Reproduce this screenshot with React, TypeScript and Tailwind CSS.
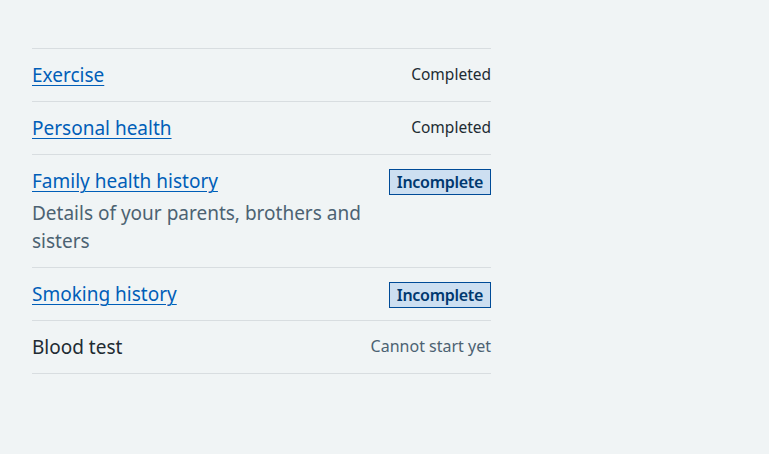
type TaskStatus = "completed" | "incomplete" | "cannot-start";

type Task = {
  name: string;
  href?: string;
  hint?: string;
  status: TaskStatus;
};

const tasks: readonly Task[] = [
  { name: "Exercise", href: "#", status: "completed" },
  { name: "Personal health", href: "#", status: "completed" },
  {
    name: "Family health history",
    href: "#",
    hint: "Details of your parents, brothers and sisters",
    status: "incomplete",
  },
  { name: "Smoking history", href: "#", status: "incomplete" },
  { name: "Blood test", status: "cannot-start" },
];

function Status({ status }: { status: TaskStatus }) {
  if (status === "incomplete") {
    return (
      <strong className="mt-[2px] inline-block shrink-0 border border-[#004b97] bg-[#cddff1] px-[7px] py-[3px] text-[16px] font-semibold leading-[18px] tracking-[-0.3px] text-[#00386f]">
        Incomplete
      </strong>
    );
  }
  if (status === "cannot-start") {
    return (
      <span className="shrink-0 pt-[1px] text-[16px] leading-6 text-[#4c6272]">
        Cannot start yet
      </span>
    );
  }
  return (
    <span className="shrink-0 pt-[1px] text-[15.5px] leading-6 text-[#212b32]">
      Completed
    </span>
  );
}

export default function App() {
  return (
    <div className="min-h-[454px] bg-[#f0f4f5] px-8 pt-12 font-['Noto_Sans',Arial,sans-serif]">
      <ul className="w-[459px] border-t border-[#d8dde0]">
        {tasks.map((task) => (
          <li
            key={task.name}
            className="flex items-start justify-between gap-5 border-b border-[#d8dde0] py-3"
          >
            <div className="min-w-0">
              {task.href ? (
                <a
                  href={task.href}
                  className="text-[19px] leading-7 text-[#005eb8] underline decoration-1 underline-offset-[3px]"
                >
                  {task.name}
                </a>
              ) : (
                <span className="text-[19px] leading-7 text-[#212b32]">
                  {task.name}
                </span>
              )}
              {task.hint ? (
                <p className="mt-1 text-[19px] leading-7 text-[#4c6272]">
                  {task.hint}
                </p>
              ) : null}
            </div>
            <Status status={task.status} />
          </li>
        ))}
      </ul>
    </div>
  );
}
